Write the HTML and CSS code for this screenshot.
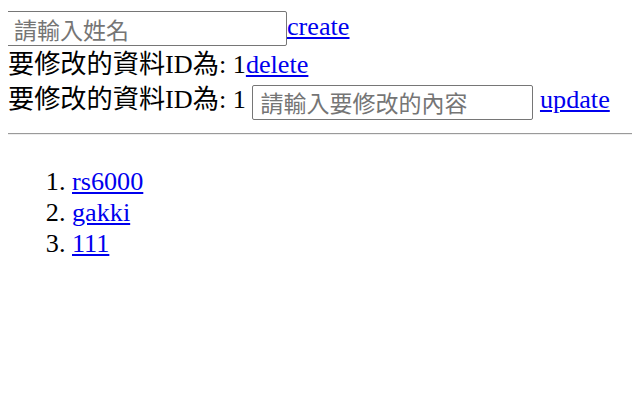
FILE: index.html
```html
<!DOCTYPE html>
<html>
<head>
<meta charset="utf-8">
<link rel="stylesheet" href="styles.css">
</head>
<body>
<div class="row first"><input class="field name" placeholder="請輸入姓名"><a href="#">create</a></div>
<div class="row second">要修改的資料ID為: 1<a href="#">delete</a></div>
<div class="row">要修改的資料ID為: 1 <input class="field edit" placeholder="請輸入要修改的內容"> <a href="#">update</a></div>
<hr class="sep">
<ol class="list">
<li><a href="#">rs6000</a></li>
<li><a href="#">gakki</a></li>
<li><a href="#">111</a></li>
</ol>
</body>
</html>
```
FILE: styles.css
```css
body {
  margin: 8px;
  font-family: "Liberation Serif", "Noto Sans CJK TC", serif;
  font-size: 26.2px;
  line-height: 31px;
  color: #000;
}
a { color: #0000ee; }
.row { white-space: nowrap; }
.first { padding-top: 3px; }
.second { line-height: 38px; }
.field {
  box-sizing: border-box;
  width: 281px;
  height: 35px;
  font-family: "Noto Sans CJK TC", sans-serif;
  font-size: 23px;
  padding: 0 7px;
  border: 1px solid #767676;
  border-radius: 2px;
  vertical-align: middle;
}
.name { margin-left: -2px; }
.field::placeholder { color: #757575; }
.sep {
  border: none;
  border-top: 1px solid #9a9a9a;
  border-bottom: 1px solid #eee;
  margin: 13px -8px 0 -2px;
}
.list {
  margin: 31px 0 0 0;
  padding-left: 64px;
}
```
